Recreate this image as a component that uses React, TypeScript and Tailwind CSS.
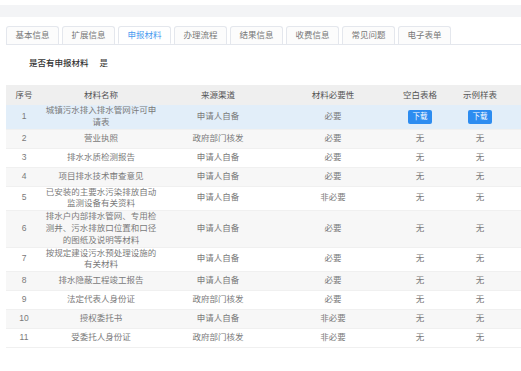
import React from 'react';

const tabs = ['基本信息', '扩展信息', '申报材料', '办理流程', '结果信息', '收费信息', '常见问题', '电子表单'];

const rows = [
  { no: '1', name: '城镇污水排入排水管网许可申请表', src: '申请人自备', need: '必要', dl: true },
  { no: '2', name: '营业执照', src: '政府部门核发', need: '必要' },
  { no: '3', name: '排水水质检测报告', src: '申请人自备', need: '必要' },
  { no: '4', name: '项目排水技术审查意见', src: '申请人自备', need: '必要' },
  { no: '5', name: '已安装的主要水污染排放自动监测设备有关资料', src: '申请人自备', need: '非必要' },
  { no: '6', name: '排水户内部排水管网、专用检测井、污水排放口位置和口径的图纸及说明等材料', src: '申请人自备', need: '必要' },
  { no: '7', name: '按规定建设污水预处理设施的有关材料', src: '申请人自备', need: '必要' },
  { no: '8', name: '排水隐蔽工程竣工报告', src: '申请人自备', need: '必要' },
  { no: '9', name: '法定代表人身份证', src: '政府部门核发', need: '必要' },
  { no: '10', name: '授权委托书', src: '申请人自备', need: '非必要' },
  { no: '11', name: '受委托人身份证', src: '政府部门核发', need: '非必要' },
];

const cols = 'grid grid-cols-[36px_118px_116px_114px_60px_60px_40px]';

function DownloadBtn() {
  return (
    <span className="inline-flex items-center justify-center w-[24px] h-[14px] rounded-[2px] bg-[#2d8cf0] text-white text-[7.5px] leading-none">
      下载
    </span>
  );
}

export default function App() {
  return (
    <div
      className="w-[521px] h-[371px] overflow-hidden bg-white text-[8.5px] text-[#7a7a7a]"
      style={{ fontFamily: '"Liberation Sans", "Noto Sans CJK SC", sans-serif' }}
    >
      <div className="mt-[5px] h-[12px] bg-[#f3f4f6]" />

      <div className="pl-[6px] mt-[9px]">
        <div className="flex gap-[3px] border-b border-[#e4e7ed] w-[600px]">
          {tabs.map((t, i) => (
            <div
              key={t}
              className={
                i === 2
                  ? 'w-[53px] h-[18px] -mb-px flex items-center justify-center rounded-t-[3px] border border-b-white border-[#e4e7ed] bg-white text-[#4a9bf0]'
                  : 'w-[53px] h-[18px] flex items-center justify-center rounded-t-[3px] border border-b-0 border-[#e4e7ed] bg-[#fcfcfc] text-[#777]'
              }
            >
              {t}
            </div>
          ))}
        </div>

        <div className="flex items-center h-[17px] mt-[10px] pl-[23px] text-[#333]">
          <span className="font-medium">是否有申报材料</span>
          <span className="ml-[11px]">是</span>
        </div>

        <div className="mt-[13px] w-[600px]">
          <div className={`${cols} h-[20px] items-center bg-[#efefef] text-[#555] text-center`}>
            <div>序号</div>
            <div>材料名称</div>
            <div>来源渠道</div>
            <div>材料必要性</div>
            <div>空白表格</div>
            <div>示例样表</div>
            <div>操作</div>
          </div>
          {rows.map((r, i) => (
            <div
              key={r.no}
              className={`${cols} min-h-[19px] items-center text-center leading-[11.8px] border-b border-[#f0f0f0] ${
                i === 0 ? 'bg-[#e2eef9]' : i % 2 === 1 ? 'bg-[#f7f7f7]' : 'bg-white'
              }`}
            >
              <div>{r.no}</div>
              <div className="px-[2px]">{r.name}</div>
              <div>{r.src}</div>
              <div>{r.need}</div>
              <div>{r.dl ? <DownloadBtn /> : '无'}</div>
              <div>{r.dl ? <DownloadBtn /> : '无'}</div>
              <div />
            </div>
          ))}
        </div>
      </div>
    </div>
  );
}
